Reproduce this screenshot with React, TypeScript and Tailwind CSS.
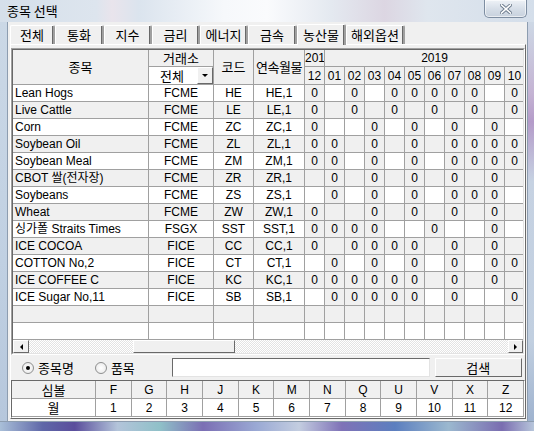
import React from "react";

type Row = { name: string; ex: string; code: string; m: string };

// m: 12 flags for months 12, 01 .. 11 ("o" = listed)
const rows: Row[] = [
  { name: "Lean Hogs", ex: "FCME", code: "HE", m: "o.o.ooooo.o." },
  { name: "Live Cattle", ex: "FCME", code: "LE", m: "o.o.o.o.o.o." },
  { name: "Corn", ex: "FCME", code: "ZC", m: "o..o.o.o.o.." },
  { name: "Soybean Oil", ex: "FCME", code: "ZL", m: "oo.o.o.oooo." },
  { name: "Soybean Meal", ex: "FCME", code: "ZM", m: "oo.o.o.oooo." },
  { name: "CBOT 쌀(전자장)", ex: "FCME", code: "ZR", m: ".o.o.o.o.o.." },
  { name: "Soybeans", ex: "FCME", code: "ZS", m: ".o.o.o.ooo.." },
  { name: "Wheat", ex: "FCME", code: "ZW", m: "o..o.o.o.o.." },
  { name: "싱가폴 Straits Times", ex: "FSGX", code: "SST", m: "oooo..o..o.." },
  { name: "ICE COCOA", ex: "FICE", code: "CC", m: "o.oooo.o.o.." },
  { name: "COTTON No,2", ex: "FICE", code: "CT", m: ".o.o.o.o.oo." },
  { name: "ICE COFFEE C", ex: "FICE", code: "KC", m: "oooooo.o.o.." },
  { name: "ICE Sugar No,11", ex: "FICE", code: "SB", m: ".ooooo.o..o." },
];

// last column sits past the visible edge of the grid
const months = ["12", "01", "02", "03", "04", "05", "06", "07", "08", "09", "10", ""];

const tabs = [
  { label: "전체", w: "w-[45px]" },
  { label: "통화", w: "w-[49px]" },
  { label: "지수", w: "w-[48px]" },
  { label: "금리", w: "w-[48px]" },
  { label: "에너지", w: "w-[48px]" },
  { label: "금속", w: "w-[49px]" },
  { label: "농산물", w: "w-[49px]", active: true },
  { label: "해외옵션", w: "w-[59px]" },
];

const symbols = [
  ["F", "1"], ["G", "2"], ["H", "3"], ["J", "4"], ["K", "5"], ["M", "6"],
  ["N", "7"], ["Q", "8"], ["U", "9"], ["V", "10"], ["X", "11"], ["Z", "12"],
];

const cell = "border-r border-b border-r-[#a0a0a0] border-b-[#a0a0a0] flex items-center justify-center shrink-0 h-full";
const raised =
  "bg-[#f0f0f0] border-t border-l border-t-white border-l-white border-r border-b border-r-[#696969] border-b-[#696969]";

function Arrow({ dir }: { dir: "left" | "right" | "down" }) {
  const pts = dir === "left" ? "3,0 3,6 0,3" : dir === "right" ? "0,0 0,6 3,3" : "0,0 6,0 3,3";
  const w = dir === "down" ? 6 : 3;
  const h = dir === "down" ? 3 : 6;
  return (
    <svg width={w} height={h} viewBox={`0 0 ${w} ${h}`}>
      <polygon points={pts} fill="#000" />
    </svg>
  );
}

function DataRow({ r, i }: { r?: Row; i: number }) {
  const band = i % 2 === 1;
  const bg = band ? "bg-[#f0f0f0]" : "bg-white";
  return (
    <div className="flex h-[17px] leading-[16px]">
      <div className={`${cell} ${bg} w-[136px] !justify-start pl-[2px] whitespace-nowrap`}>{r?.name}</div>
      <div className={`${cell} ${bg} w-[65px]`}>{r?.ex}</div>
      <div className={`${cell} ${bg} w-[40px]`}>{r?.code}</div>
      <div className={`${cell} ${bg} w-[51px]`}>{r ? `${r.code},1` : ""}</div>
      {months.map((_, k) => {
        const on = r ? r.m[k] === "o" : false;
        return (
          <div key={k} className={`${cell} w-[20px] ${on || band ? "bg-[#f0f0f0]" : "bg-white"}`}>
            {on ? "0" : ""}
          </div>
        );
      })}
    </div>
  );
}

export default function App() {
  return (
    <div className="relative w-[534px] h-[431px] overflow-hidden bg-[#c9d6e4] font-['Liberation_Sans','Noto_Sans_CJK_KR',sans-serif] text-[12px] text-black">
      {/* title bar */}
      <div className="h-[22px] flex items-start bg-[linear-gradient(90deg,#d5dfea_0%,#dde5ee_18%,#e9e4ec_21%,#dbe4ee_26%,#f6f8fb_42%,#fafbfd_50%,#e4e9f0_62%,#dcd6e2_72%,#dfe6ee_80%,#d4deea_100%)]">
        <span className="ml-[7px] mt-[2px] text-[13px] leading-[17px] font-['Noto_Sans_CJK_KR',sans-serif]">종목 선택</span>
        <div className="ml-auto mr-[7px] w-[43px] h-[18px] rounded-b-[5px] border border-t-0 border-[#7d8da1] bg-[linear-gradient(180deg,#eef2f7,#d5dde7_55%,#c7d1dd)] flex items-center justify-center shadow-[inset_0_0_0_1px_rgba(255,255,255,0.6)]">
          <svg width="12" height="10" viewBox="0 0 12 10">
            <path d="M1.5 1 L10.5 9 M10.5 1 L1.5 9" stroke="#6b7a8c" strokeWidth="3.4" strokeLinecap="square" />
            <path d="M1.5 1 L10.5 9 M10.5 1 L1.5 9" stroke="#ffffff" strokeWidth="1.6" strokeLinecap="square" />
          </svg>
        </div>
      </div>

      <div className="flex h-[399px]">
        {/* left frame */}
        <div className="w-[8px] h-full bg-[linear-gradient(180deg,#cbd8e6,#c0d0e2_60%,#b6c7dc)] border-r border-r-[#8d9db0]" />

        {/* client */}
        <div className="w-[519px] h-full bg-[#f0f0f0]">
          {/* tabs */}
          <div className="relative z-10 mt-[2px] pl-[2px] h-[20px] flex items-end">
            {tabs.map((t) => (
              <div
                key={t.label}
                className={`${t.w} ${
                  t.active ? "h-[21px] -mb-px" : "h-[19px]"
                } shrink-0 flex items-center justify-center bg-[#f0f0f0] border-t border-l border-t-white border-l-white border-r-2 border-r-[#a0a0a0] rounded-tl-[2px] rounded-tr-[2px] text-[13px] leading-[16px] font-['Noto_Sans_CJK_KR',sans-serif] shadow-[inset_-1px_0_#696969]`}
              >
                {t.label}
              </div>
            ))}
          </div>

          {/* tab panel */}
          <div className="ml-[2px] w-[516px] border-t border-l border-t-white border-l-white border-r border-b border-r-[#696969] border-b-[#696969]">
            {/* grid */}
            <div className="mt-[3px] w-[514px] h-[307px] border-t border-l border-t-[#a0a0a0] border-l-[#a0a0a0] border-r border-b border-r-white border-b-white">
              <div className="w-full h-full border-t border-l border-t-[#696969] border-l-[#696969] border-r border-b border-r-[#e3e3e3] border-b-[#e3e3e3] overflow-hidden bg-white flex flex-col">
                <div className="w-[532px] shrink-0">
                  {/* header */}
                  <div className="grid grid-cols-[136px_65px_40px_51px_repeat(12,20px)] grid-rows-[17px_18px] bg-[#f0f0f0] font-['Noto_Sans_CJK_KR',sans-serif] text-[13px] leading-[16px]">
                    <div className={`${cell} col-start-1 row-start-1 row-span-2`}>종목</div>
                    <div className={`${cell} col-start-2 row-start-1`}>거래소</div>
                    <div className={`${cell} col-start-3 row-start-1 row-span-2`}>코드</div>
                    <div className={`${cell} col-start-4 row-start-1 row-span-2 tracking-[-0.5px]`}>연속월물</div>
                    <div className={`${cell} col-start-5 row-start-1 overflow-hidden !justify-start font-['Liberation_Sans',sans-serif] text-[12px]`}>
                      <span className="whitespace-nowrap">201</span>
                    </div>
                    <div className={`${cell} col-start-6 col-span-11 row-start-1 font-['Liberation_Sans',sans-serif] text-[12px]`}>2019</div>
                    <div className="col-start-2 row-start-2 flex border-r border-b border-r-[#a0a0a0] border-b-[#a0a0a0]">
                      <div className="flex-1 bg-white flex items-center pl-[11px]">전체</div>
                      <div className={`${raised} w-[16px] flex items-center justify-center`}>
                        <Arrow dir="down" />
                      </div>
                    </div>
                    {months.map((m, k) => (
                      <div key={k} className={`${cell} row-start-2 font-['Liberation_Sans',sans-serif] text-[12px]`} style={{ gridColumnStart: k + 5 }}>
                        {m}
                      </div>
                    ))}
                  </div>

                  {/* body */}
                  {rows.map((r, i) => (
                    <DataRow key={r.code} r={r} i={i} />
                  ))}
                  <DataRow i={13} />
                  <DataRow i={14} />
                </div>

                {/* horizontal scrollbar */}
                <div className="h-[13px] flex shrink-0 bg-[repeating-conic-gradient(#ffffff_0_25%,#e3e3e3_0_50%)] bg-[length:2px_2px]">
                  <div className={`${raised} w-[16px] h-full flex items-center justify-center`}>
                    <Arrow dir="left" />
                  </div>
                  <div className="w-[104px]" />
                  <div className={`${raised} w-[102px] h-full`} />
                  <div className="flex-1" />
                  <div className={`${raised} w-[15px] h-full flex items-center justify-center`}>
                    <Arrow dir="right" />
                  </div>
                </div>
              </div>
            </div>

            {/* search row */}
            <div className="mt-[3px] h-[19px] flex items-center font-['Noto_Sans_CJK_KR',sans-serif] text-[13px] leading-[16px]">
              <div className="ml-[11px] w-[12px] h-[12px] rounded-full border border-[#8e8f8f] bg-[radial-gradient(circle,#ffffff,#e6e6e6)] flex items-center justify-center">
                <div className="w-[4px] h-[4px] rounded-full bg-black" />
              </div>
              <span className="ml-[4px]">종목명</span>
              <div className="ml-[21px] w-[12px] h-[12px] rounded-full border border-[#8e8f8f] bg-[radial-gradient(circle,#ffffff,#e6e6e6)]" />
              <span className="ml-[4px]">품목</span>
              <div className="ml-[37px] w-[258px] h-[19px] bg-white border-t border-l border-t-[#696969] border-l-[#696969] border-r border-b border-r-[#e3e3e3] border-b-[#e3e3e3]" />
              <div className={`${raised} ml-[5px] w-[87px] h-[19px] flex items-center justify-center`}>검색</div>
            </div>

            {/* symbol table */}
            <div className="mt-[3px] w-[514px] border border-t-[#696969] border-l-[#696969] border-r-white border-b-white">
              <div className="grid grid-cols-[84px_repeat(12,1fr)] grid-rows-[18px_18px] leading-[16px]">
                <div className={`${cell} bg-[#f0f0f0] font-['Noto_Sans_CJK_KR',sans-serif] text-[13px]`}>심볼</div>
                {symbols.map(([s]) => (
                  <div key={s} className={`${cell} bg-[#f0f0f0]`}>{s}</div>
                ))}
                <div className={`${cell} bg-white font-['Noto_Sans_CJK_KR',sans-serif] text-[13px]`}>월</div>
                {symbols.map(([s, n]) => (
                  <div key={n} className={`${cell} bg-white`}>{n}</div>
                ))}
              </div>
            </div>
          </div>
        </div>

        {/* right frame */}
        <div className="w-[7px] h-full border-l border-l-[#8d9db0] bg-[linear-gradient(180deg,#cdd8e5,#c4b3d3_18%,#b49bc9_25%,#c6d2e2_40%,#c1cfe0_80%,#9fb3cf)]" />
      </div>

      {/* bottom frame */}
      <div className="h-[10px] border-t border-t-[#8d9db0] bg-[linear-gradient(90deg,#a9bfd8_0%,#5f67a8_8%,#5a4e9c_14%,#b3c4da_22%,#8fc0c8_30%,#7b6fb4_38%,#9aa9d4_48%,#c3cde0_56%,#7f72b7_64%,#5c7fbf_74%,#9bb8cf_84%,#7a6db0_94%,#b7c6db_100%)]" />
    </div>
  );
}
